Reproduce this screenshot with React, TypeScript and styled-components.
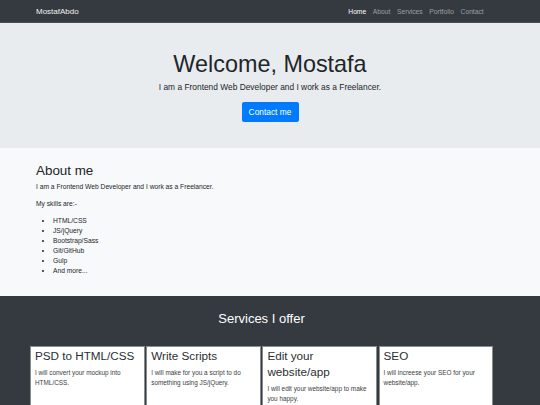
import React from 'react';
import styled, { createGlobalStyle } from 'styled-components';

const GlobalStyle = createGlobalStyle`
  html, body {
    margin: 0;
    padding: 0;
  }
  body {
    font-family: 'Liberation Sans', Arial, Helvetica, sans-serif;
    color: #212529;
    background: #343a40;
  }
  * {
    box-sizing: border-box;
  }
`;

const Nav = {
  Bar: styled.nav`
    height: 23px;
    background-color: #343a40;
    display: flex;
    justify-content: space-between;
    align-items: center;
    padding: 0 53px 0 36px;
    border-bottom: 1px solid #4a5057;
  `,
  Brand: styled.div`
    color: #f2f2f2;
    font-size: 8px;
  `,
  Links: styled.div`
    display: flex;
  `,
  Link: styled.a<{ $active?: boolean }>`
    color: ${(p) => (p.$active ? '#ffffff' : 'rgba(255, 255, 255, 0.5)')};
    font-size: 6.7px;
    padding: 0 3.35px;
    text-decoration: none;
  `,
};

const Hero = {
  Wrap: styled.header`
    height: 125px;
    background-color: #e9ecef;
    display: flex;
    flex-direction: column;
    align-items: center;
    padding-top: 27px;
  `,
  Title: styled.h1`
    margin: 0 0 3px;
    font-size: 23.4px;
    font-weight: 400;
    line-height: 28px;
    color: #212529;
  `,
  Lead: styled.p`
    margin: 0 0 8px;
    font-size: 8.4px;
    line-height: 12.6px;
    color: #212529;
  `,
  Button: styled.button`
    width: 57px;
    height: 20px;
    border: none;
    border-radius: 2px;
    background-color: #007bff;
    color: #ffffff;
    font-family: inherit;
    font-size: 8.4px;
    padding: 0;
  `,
};

const About = {
  Wrap: styled.section`
    height: 148px;
    background-color: #f8f9fa;
    padding: 15px 36px 0;
  `,
  Title: styled.h2`
    margin: 0 0 3px;
    font-size: 13.4px;
    font-weight: 400;
    line-height: 16px;
    color: #212529;
  `,
  Text: styled.p`
    margin: 0 0 7px;
    font-size: 6.7px;
    line-height: 10px;
    color: #212529;
  `,
  List: styled.ul`
    margin: 0;
    padding-left: 17px;
    font-size: 6.7px;
    line-height: 10px;
    color: #212529;
  `,
};

const Services = {
  Wrap: styled.section`
    background-color: #343a40;
    padding: 15px 0 0 30px;
    min-height: 109px;
  `,
  Inner: styled.div`
    width: 463px;
  `,
  Title: styled.h2`
    margin: 0 0 19px;
    text-align: center;
    font-size: 13px;
    font-weight: 400;
    line-height: 16px;
    color: #ffffff;
  `,
  Grid: styled.div`
    display: grid;
    grid-template-columns: repeat(4, 114.5px);
    column-gap: 1.7px;
  `,
  Card: styled.div`
    background-color: #ffffff;
    border: 1px solid #8a8d90;
    min-height: 110px;
    padding: 1px 4px 0;
  `,
  CardTitle: styled.h3`
    margin: 0 0 4px;
    font-size: 11.7px;
    font-weight: 400;
    line-height: 16px;
    color: #2b2f33;
  `,
  CardText: styled.p`
    margin: 0;
    font-size: 6.4px;
    line-height: 9.8px;
    color: #3a3d40;
  `,
};

const skills = ['HTML/CSS', 'JS/jQuery', 'Bootstrap/Sass', 'Git/GitHub', 'Gulp', 'And more...'];

const offers = [
  { title: 'PSD to HTML/CSS', text: 'I will convert your mockup into HTML/CSS.' },
  { title: 'Write Scripts', text: 'I will make for you a script to do something using JS/jQuery.' },
  { title: 'Edit your website/app', text: 'I will edit your website/app to make you happy.' },
  { title: 'SEO', text: 'I will increese your SEO for your website/app.' },
];

function App() {
  return (
    <div>
      <GlobalStyle />
      <Nav.Bar>
        <Nav.Brand>MostafAbdo</Nav.Brand>
        <Nav.Links>
          <Nav.Link $active>Home</Nav.Link>
          <Nav.Link>About</Nav.Link>
          <Nav.Link>Services</Nav.Link>
          <Nav.Link>Portfolio</Nav.Link>
          <Nav.Link>Contact</Nav.Link>
        </Nav.Links>
      </Nav.Bar>

      <Hero.Wrap>
        <Hero.Title>Welcome, Mostafa</Hero.Title>
        <Hero.Lead>I am a Frontend Web Developer and I work as a Freelancer.</Hero.Lead>
        <Hero.Button>Contact me</Hero.Button>
      </Hero.Wrap>

      <About.Wrap>
        <About.Title>About me</About.Title>
        <About.Text>I am a Frontend Web Developer and I work as a Freelancer.</About.Text>
        <About.Text>My skills are:-</About.Text>
        <About.List>
          {skills.map((s) => (
            <li key={s}>{s}</li>
          ))}
        </About.List>
      </About.Wrap>

      <Services.Wrap>
        <Services.Inner>
          <Services.Title>Services I offer</Services.Title>
          <Services.Grid>
            {offers.map((o) => (
              <Services.Card key={o.title}>
                <Services.CardTitle>{o.title}</Services.CardTitle>
                <Services.CardText>{o.text}</Services.CardText>
              </Services.Card>
            ))}
          </Services.Grid>
        </Services.Inner>
      </Services.Wrap>
    </div>
  );
}

export default App;
